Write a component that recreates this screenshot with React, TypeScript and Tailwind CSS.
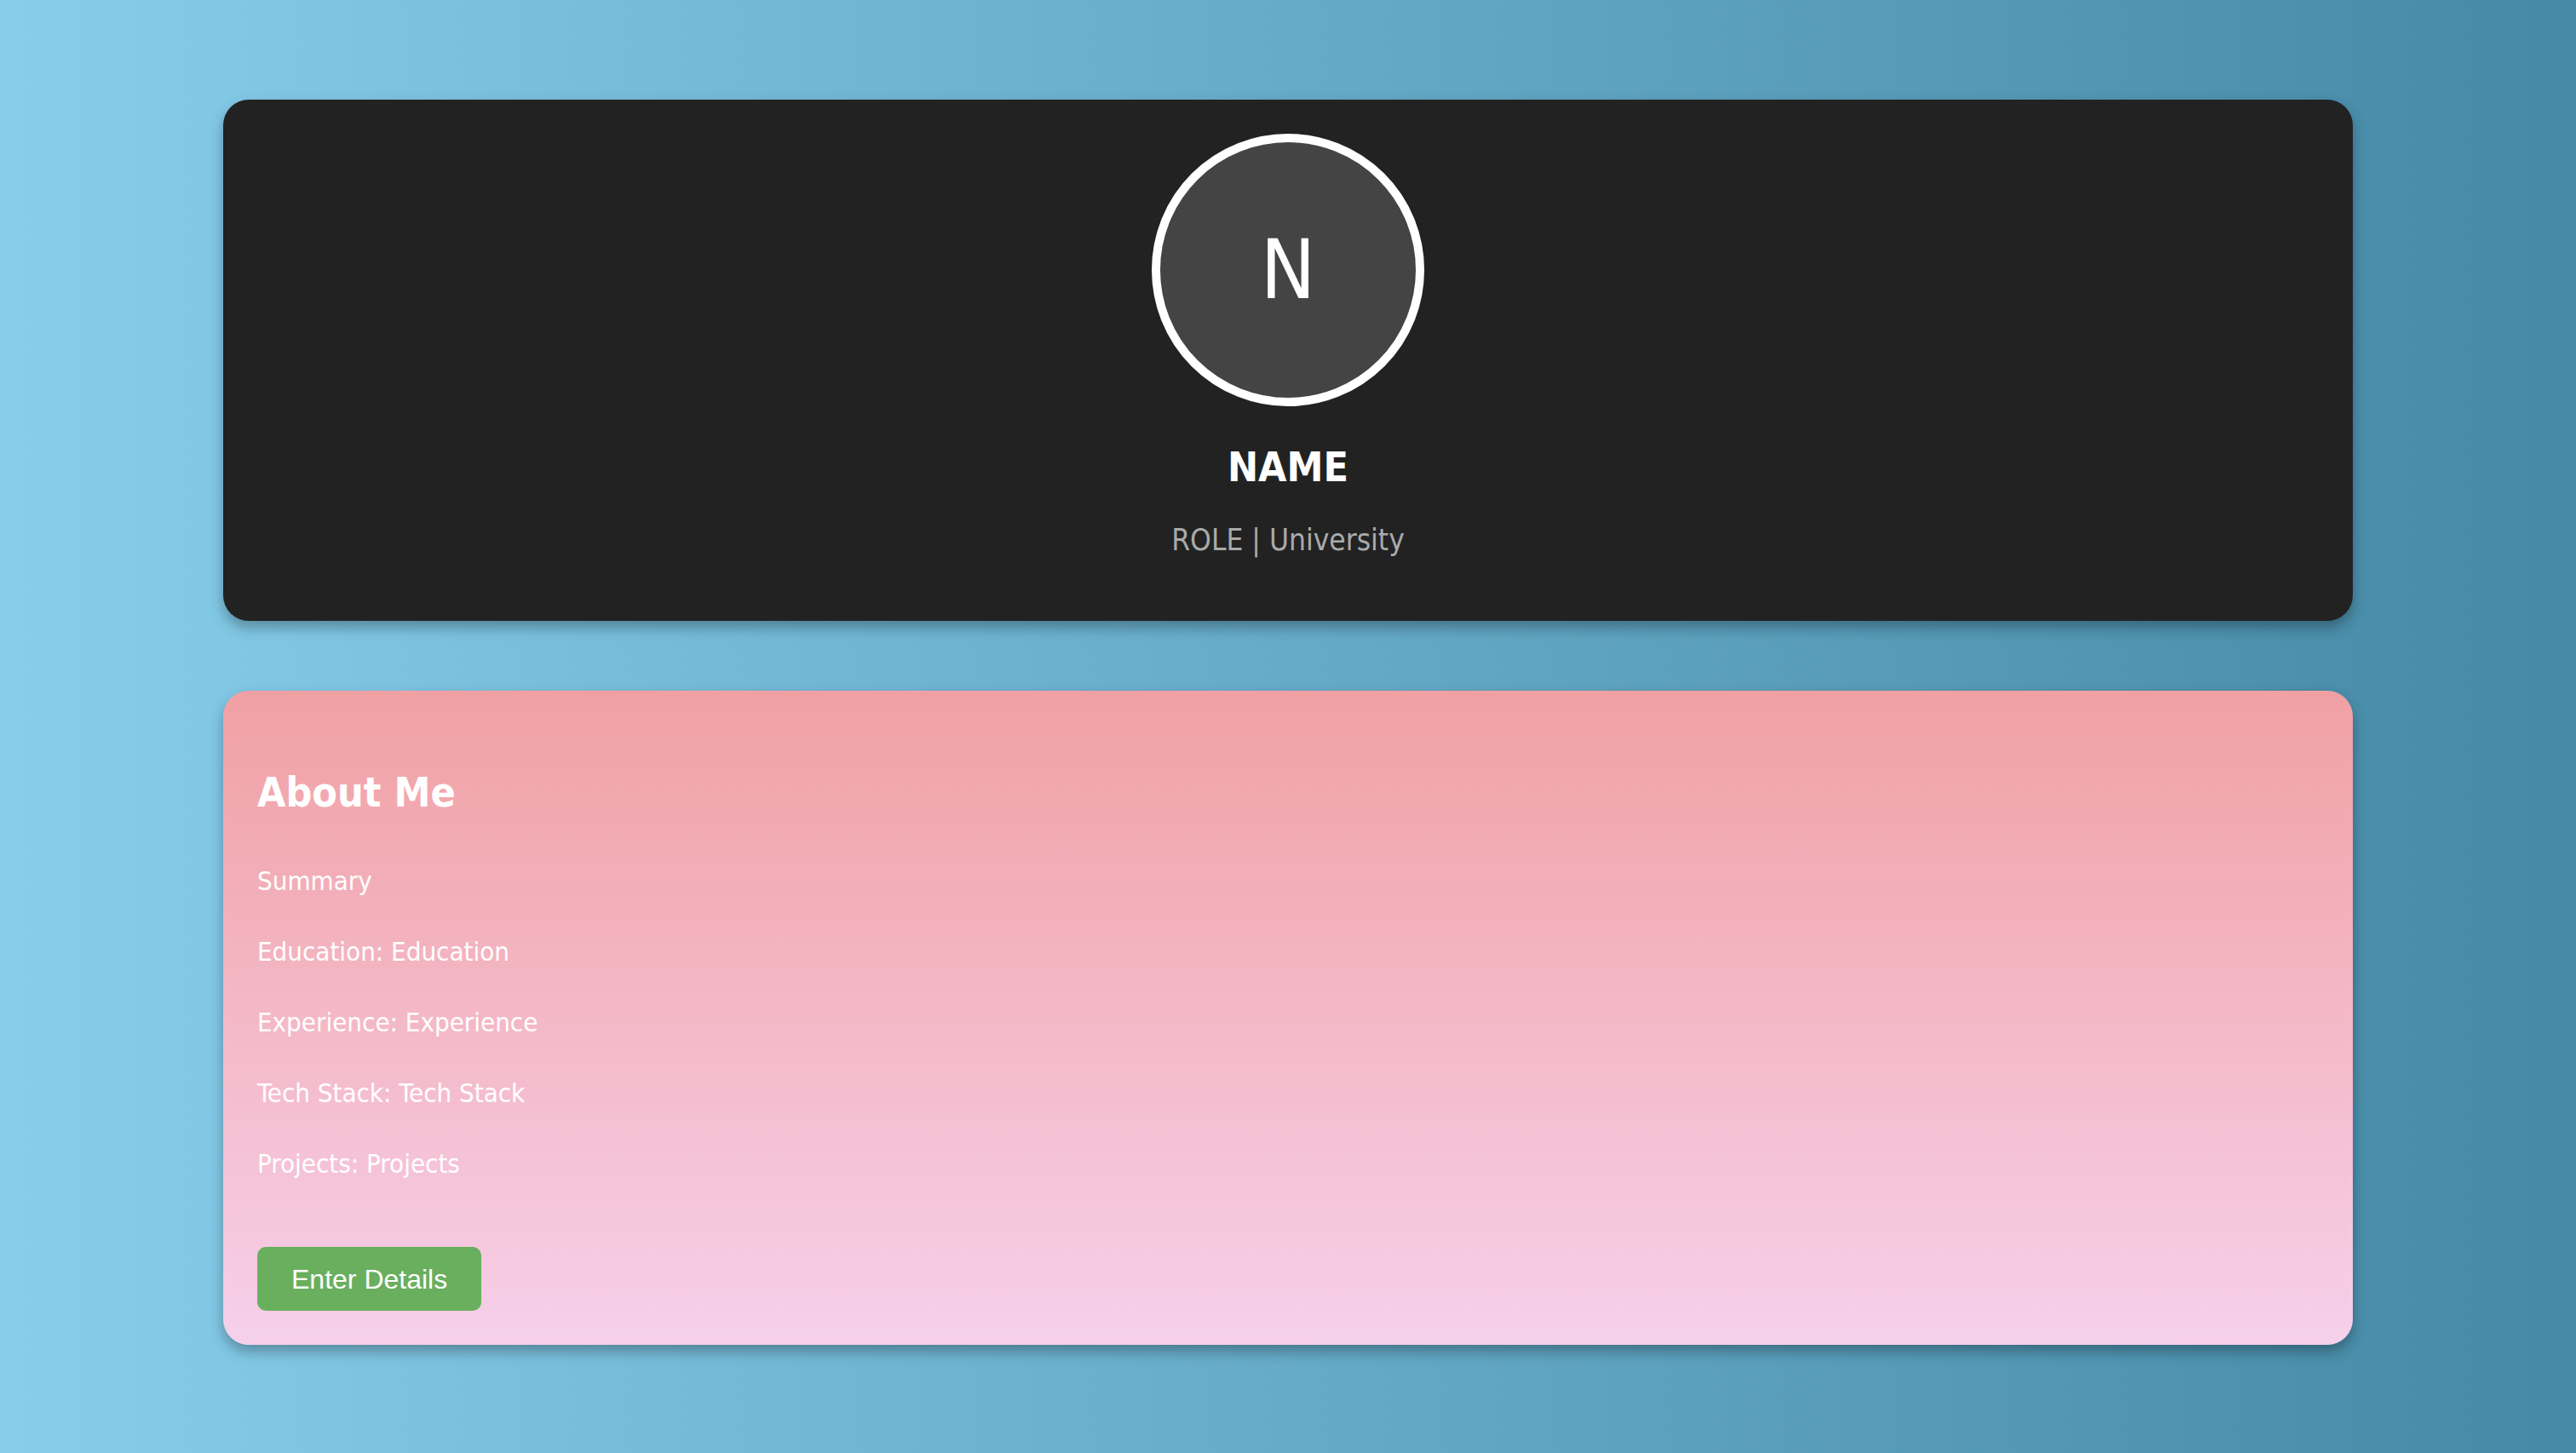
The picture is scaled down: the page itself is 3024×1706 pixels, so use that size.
const font = "font-['Tahoma','DejaVu_Sans_Condensed','DejaVu_Sans',sans-serif]";

const details = [
  "Summary",
  "Education: Education",
  "Experience: Experience",
  "Tech Stack: Tech Stack",
  "Projects: Projects",
];

const ProfileHeader = () => {
  return (
    <div className="w-full h-[612px] rounded-[30px] bg-[#222222] shadow-[0_8px_16px_rgba(0,0,0,0.3)] flex flex-col items-center pt-[40px]">
      <div className="w-[320px] h-[320px] rounded-full border-[10px] border-white bg-[#444444] flex items-center justify-center">
        <span className={`${font} text-[96px] leading-none text-white`}>N</span>
      </div>
      <h2 className={`${font} mt-[42px] text-[48px] leading-[58px] font-bold text-white`}>
        NAME
      </h2>
      <p className={`${font} mt-[35px] text-[35px] leading-[44px] text-[#aaaaaa]`}>
        ROLE | University
      </p>
    </div>
  );
};

const AboutCard = () => {
  return (
    <div className="w-full rounded-[30px] bg-gradient-to-b from-[#f0a0a3] to-[#f6d0eb] shadow-[0_8px_16px_rgba(0,0,0,0.3)] px-[40px] pt-[90px] pb-[40px]">
      <h2 className={`${font} text-[48px] leading-[58px] font-bold text-white`}>About Me</h2>
      <div className="flex flex-col gap-[43px] mt-[55px]">
        {details.map((d) => (
          <p key={d} className={`${font} text-[31px] leading-[40px] text-white`}>
            {d}
          </p>
        ))}
      </div>
      <button className="mt-[78px] h-[75px] px-[40px] rounded-[10px] bg-[#6aaf5e] text-white text-[32px] font-['Liberation_Sans',Arial,sans-serif]">
        Enter Details
      </button>
    </div>
  );
};

export default function App() {
  return (
    <div className="min-h-screen w-full bg-gradient-to-r from-[#87ceeb] to-[#4589a6] px-[262px] pt-[117px] pb-[126px] flex flex-col gap-[82px]">
      <ProfileHeader />
      <AboutCard />
    </div>
  );
}
